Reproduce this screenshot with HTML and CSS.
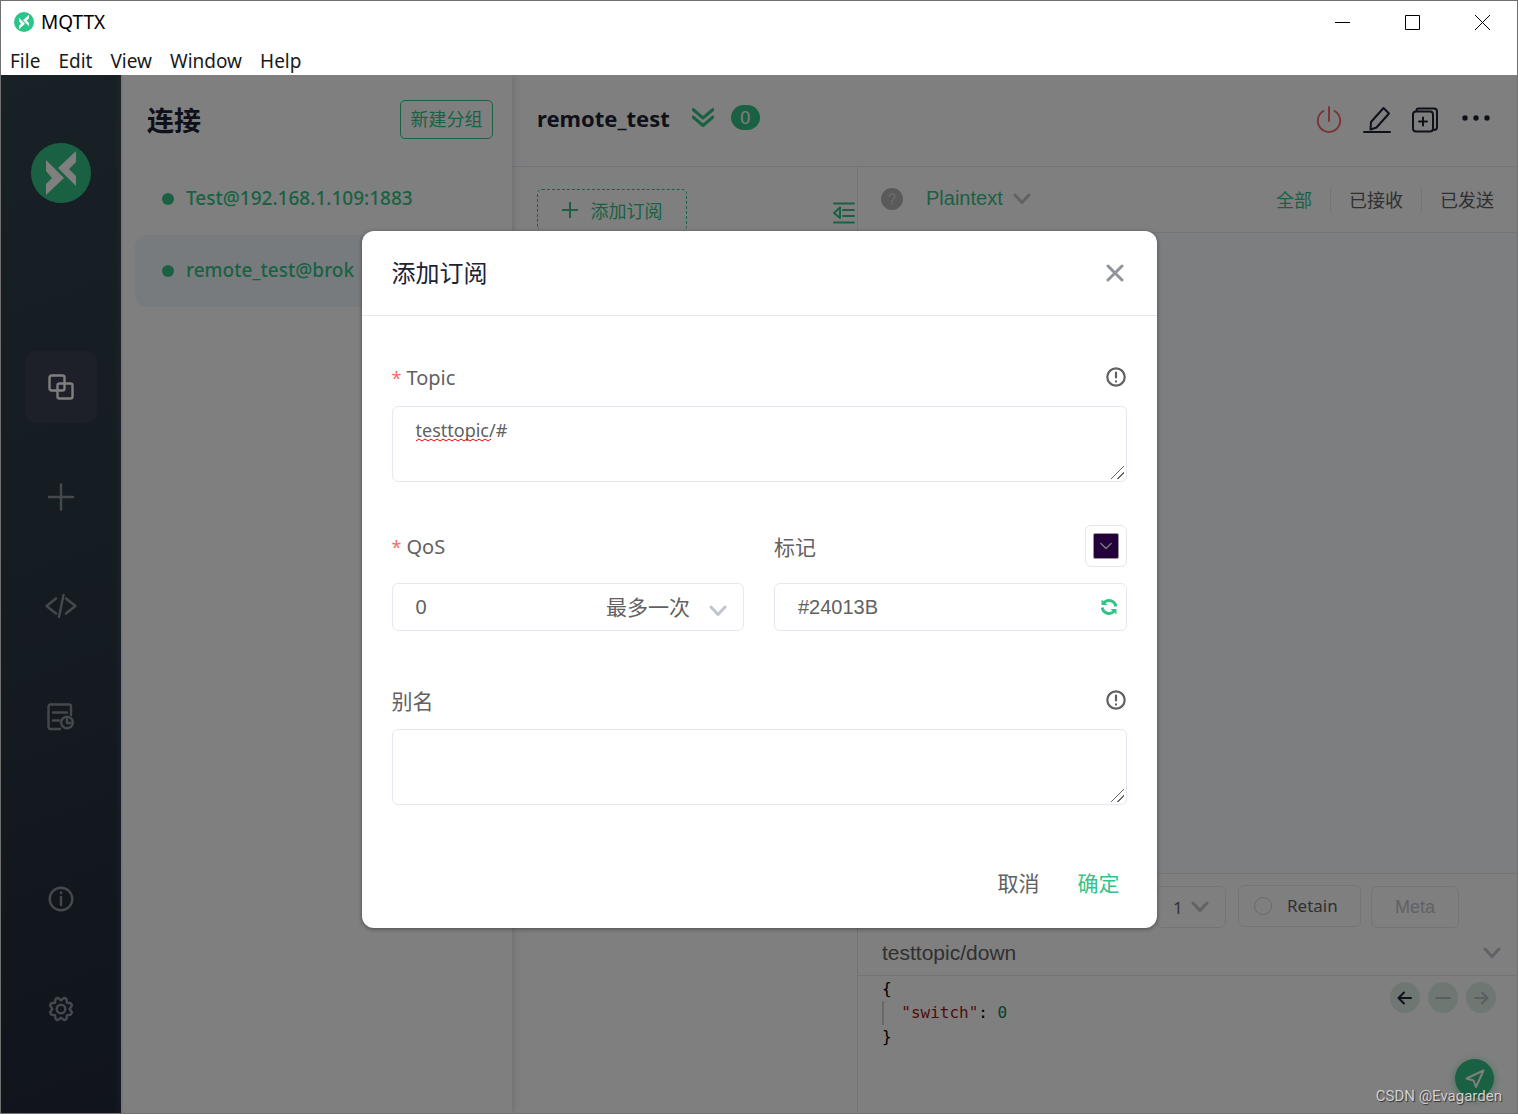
FILE: index.html
```html
<!DOCTYPE html>
<html lang="zh-CN">
<head>
    <meta charset="UTF-8">
    <meta name="viewport" content="width=device-width, initial-scale=1.0">
    <title>MQTTX</title>
    <link rel="stylesheet" href="styles.css">
</head>
<body>
    <header class="window-bar">
        <div class="title-row">
            <svg class="app-icon" viewBox="0 0 60 60">
                <circle cx="30" cy="30" r="30" fill="#2ac587"/>
                <path d="M15 17 33 35 15 52V41L21 35 15 28zM45 8V19L38 26 45 33V43L27 25z" fill="#fff"/>
            </svg>
            <span class="app-name">MQTTX</span>
            <div class="window-controls">
                <button type="button" aria-label="Minimize"><svg width="15" height="15" viewBox="0 0 15 15"><path d="M0 7.500H15"/></svg></button>
                <button type="button" aria-label="Maximize"><svg width="15" height="15" viewBox="0 0 15 15"><path d="M.5.5h14v14H.5z"/></svg></button>
                <button type="button" aria-label="Close"><svg width="15" height="15" viewBox="0 0 15 15"><path d="M0 0 15 15M15 0 0 15"/></svg></button>
            </div>
        </div>
        <nav class="menu-row">
            <a href="#">File</a>
            <a href="#">Edit</a>
            <a href="#">View</a>
            <a href="#">Window</a>
            <a href="#">Help</a>
        </nav>
    </header>

    <div class="app">
        <aside class="sidebar">
            <svg class="logo" viewBox="0 0 60 60">
                <circle cx="30" cy="30" r="30" fill="#34c388"/>
                <path d="M15 17 33 35 15 52V41L21 35 15 28zM45 8V19L38 26 45 33V43L27 25z" fill="#fff"/>
            </svg>
            <nav class="side-nav">
                <a href="#" class="active" aria-label="Connections">
                    <svg viewBox="0 0 28 28"><rect x="2.500" y="2.500" width="15" height="15" rx="2"/><rect x="10.500" y="10.500" width="15" height="15" rx="2"/></svg>
                </a>
                <a href="#" aria-label="New connection">
                    <svg viewBox="0 0 28 28" class="thin"><path d="M14 1.500v25M2 14h24"/></svg>
                </a>
                <a href="#" aria-label="Script">
                    <svg viewBox="0 0 32 28" class="wide"><path d="M11 5.500 1.500 13 11 20.500M21 5.500 30.500 13 21 20.500M18.500 2 14 24"/></svg>
                </a>
                <a href="#" aria-label="Log">
                    <svg viewBox="0 0 28 28"><path d="M13 26H3.500a2 2 0 0 1-2-2V3.500a2 2 0 0 1 2-2H22a2 2 0 0 1 2 2V12M6 9.500h14M6 17.500h6"/><circle cx="20" cy="19.500" r="5.800"/><path d="M20 16v4h3.500"/></svg>
                </a>
            </nav>
            <nav class="side-nav side-bottom">
                <a href="#" aria-label="About">
                    <svg viewBox="0 0 28 28"><circle cx="14" cy="14" r="11.300"/><path d="M14 12v8M14 7.500v.5"/></svg>
                </a>
                <a href="#" aria-label="Settings">
                    <svg viewBox="0 0 28 28"><circle cx="14" cy="14" r="4.300"/><path d="M10.800 2.800 14 5.200l3.200-2.400 2.200 1 .6 3.900 3.900.6 1 2.300L22.600 14l2.300 3.300-1 2.300-3.900.6-.6 3.900-2.200 1L14 22.800l-3.200 2.300-2.200-1-.6-3.900-3.900-.6-1-2.300L5.400 14l-2.300-3.400 1-2.300L8 7.700l.6-3.900z"/></svg>
                </a>
            </nav>
        </aside>

        <section class="connections">
            <div class="connections-head">
                <h1>连接</h1>
                <button type="button" class="group-btn">新建分组</button>
            </div>
            <ul class="connection-list">
                <li><a href="#"><i class="dot"></i><span>Test@192.168.1.109:1883</span></a></li>
                <li><a href="#" class="selected"><i class="dot"></i><span>remote_test@brok</span></a></li>
            </ul>
        </section>

        <main class="main">
            <div class="main-head">
                <h2>remote_test</h2>
                <button type="button" class="icon-btn expand" aria-label="Expand">
                    <svg width="22" height="20" viewBox="0 0 22 20"><path d="M1 1.500 11 10 21 1.500M1 9 11 17.500 21 9"/></svg>
                </button>
                <span class="badge">0</span>
                <div class="actions">
                    <button type="button" class="icon-btn power" aria-label="Disconnect">
                        <svg width="28" height="28" viewBox="0 0 28 28"><path d="M14 1v14M8.500 5A11.200 11.200 0 1 0 19.500 5"/></svg>
                    </button>
                    <button type="button" class="icon-btn" aria-label="Edit">
                        <svg width="28" height="28" viewBox="0 0 28 28"><path d="M1 26h26M7.500 23.500 8 16 20.500 2l5.500 5.500L13.500 21.500z"/></svg>
                    </button>
                    <button type="button" class="icon-btn" aria-label="New window">
                        <svg width="28" height="28" viewBox="0 0 28 28"><rect x="2" y="5.500" width="20" height="20" rx="3"/><path d="M5.500 5V4.500a2 2 0 0 1 2-2H23a3 3 0 0 1 3 3V21a3 3 0 0 1-3 3M12 11.500v8M8 15.500h8"/></svg>
                    </button>
                    <button type="button" class="icon-btn more" aria-label="More">
                        <svg width="28" height="28" viewBox="0 0 28 28"><circle cx="3" cy="12" r="2.700"/><circle cx="14" cy="12" r="2.700"/><circle cx="25" cy="12" r="2.700"/></svg>
                    </button>
                </div>
            </div>

            <div class="main-body">
                <div class="subscriptions">
                    <button type="button" class="add-sub">
                        <svg width="16" height="16" viewBox="0 0 16 16"><path d="M8 0v16M0 8h16"/></svg>
                        添加订阅
                    </button>
                    <button type="button" class="icon-btn collapse" aria-label="Collapse">
                        <svg width="22" height="22" viewBox="0 0 22 22"><path d="M1 1.500h20M10 8h11M10 14h11M1 20.500h20M7 5.500v10.500L1 11z"/></svg>
                    </button>
                </div>

                <div class="messages">
                    <div class="filter-bar">
                        <svg class="help" width="22" height="22" viewBox="0 0 22 22"><circle cx="11" cy="11" r="11"/><path d="M8 8.500a3 3 0 1 1 3.800 3q-.8.300-.8 1.500v1M11 15.500v1.200"/></svg>
                        <label class="format">
                            <select aria-label="Format"><option>Plaintext</option></select>
                            <svg width="18" height="12" viewBox="0 0 18 12"><path d="M2 2 9 9.500 16 2"/></svg>
                        </label>
                        <div class="filters">
                            <button type="button" class="on">全部</button>
                            <button type="button">已接收</button>
                            <button type="button">已发送</button>
                        </div>
                    </div>
                    <div class="message-list"></div>
                    <div class="publish">
                        <div class="publish-options">
                            <label class="qos">
                                <select aria-label="QoS"><option>1</option></select>
                                <svg width="18" height="12" viewBox="0 0 18 12"><path d="M2 2 9 9.500 16 2"/></svg>
                            </label>
                            <label class="retain"><input type="radio" name="retain">Retain</label>
                            <button type="button" class="meta">Meta</button>
                        </div>
                        <div class="publish-topic">
                            <input type="text" value="testtopic/down" aria-label="Topic">
                            <svg width="18" height="12" viewBox="0 0 18 12"><path d="M2 2 9 9.500 16 2"/></svg>
                        </div>
                        <div class="editor">
                            <pre class="code">{
<span class="indent">  <span class="key">"switch"</span>: <span class="num">0</span></span>
}</pre>
                            <div class="history">
                                <button type="button" class="current" aria-label="Previous"><svg width="16" height="14" viewBox="0 0 16 14"><path d="M14 7H2M7 1.500 1.500 7 7 12.500"/></svg></button>
                                <button type="button" aria-label="Clear"><svg width="16" height="14" viewBox="0 0 16 14"><path d="M1 7h14"/></svg></button>
                                <button type="button" aria-label="Next"><svg width="16" height="14" viewBox="0 0 16 14"><path d="M2 7h12M9 1.500 14.500 7 9 12.500"/></svg></button>
                            </div>
                            <button type="button" class="send" aria-label="Send">
                                <svg width="20" height="20" viewBox="0 0 20 20"><path d="M1.500 9.500 18.500 1.500 11 18 8.500 11.500z"/></svg>
                            </button>
                        </div>
                    </div>
                </div>
            </div>
        </main>

        <div class="overlay">
            <form class="dialog" role="dialog" aria-labelledby="dialogTitle">
                <div class="dialog-head">
                    <h3 id="dialogTitle">添加订阅</h3>
                    <button type="button" class="icon-btn close" aria-label="Close">
                        <svg width="18" height="18" viewBox="0 0 18 18"><path d="M2 2 16 16M16 2 2 16"/></svg>
                    </button>
                </div>
                <div class="dialog-body">
                    <div class="field area">
                        <div class="field-head">
                            <label for="topic" class="required">Topic</label>
                            <svg class="tip" width="22" height="22" viewBox="0 0 22 22"><circle cx="11" cy="11" r="8.700"/><path d="M11 6.500v5M11 15.400v.2"/></svg>
                        </div>
                        <div class="topic-box">
                            <textarea id="topic" spellcheck="false">testtopic/#</textarea>
                            <svg class="typo" width="75" height="4" viewBox="0 0 75 4"><path d="M0 3 3 1 6 3 9 1 12 3 15 1 18 3 21 1 24 3 27 1 30 3 33 1 36 3 39 1 42 3 45 1 48 3 51 1 54 3 57 1 60 3 63 1 66 3 69 1 72 3 75 1"/></svg>
                        </div>
                    </div>
                    <div class="field-pair">
                        <div class="field">
                            <div class="field-head">
                                <label for="qos" class="required">QoS</label>
                            </div>
                            <div class="control">
                                <select id="qos"><option>0</option></select>
                                <span class="qos-desc">最多一次</span>
                                <svg width="18" height="20" viewBox="0 0 18 20"><path d="M2 10 9 17.500 16 10"/></svg>
                            </div>
                        </div>
                        <div class="field">
                            <div class="field-head">
                                <label for="color">标记</label>
                                <button type="button" class="picker" aria-label="Pick colour">
                                    <span class="swatch"><svg width="12" height="8" viewBox="0 0 12 8"><path d="M1 1.500 6 6.500 11 1.500"/></svg></span>
                                </button>
                            </div>
                            <div class="control">
                                <input type="text" id="color" value="#24013B">
                                <button type="button" class="icon-btn refresh" aria-label="Refresh">
                                    <svg width="18" height="18" viewBox="0 0 18 18"><path d="M3.500 5.500A6.800 6.800 0 0 1 15.800 8.500M14.500 12.500A6.800 6.800 0 0 1 2.200 9.500"/><path class="head" d="M1.500 1.500v5.500h6zM16.500 16.500V11h-6z"/></svg>
                                </button>
                            </div>
                        </div>
                    </div>
                    <div class="field area">
                        <div class="field-head">
                            <label for="alias">别名</label>
                            <svg class="tip" width="22" height="22" viewBox="0 0 22 22"><circle cx="11" cy="11" r="8.700"/><path d="M11 6.500v5M11 15.400v.2"/></svg>
                        </div>
                        <textarea id="alias"></textarea>
                    </div>
                </div>
                <div class="dialog-foot">
                    <button type="button">取消</button>
                    <button type="submit" class="confirm">确定</button>
                </div>
            </form>
        </div>
        <span class="watermark">CSDN @Evagarden</span>
    </div>
</body>
</html>
```
FILE: styles.css
```css
* {
    margin: 0;
    padding: 0;
    box-sizing: border-box;
}

:root {
    --green: #34c388;
    --line: #e6e8f1;
    --text: #616161;
    --title: #1c2334;
    --ui: "Noto Sans", "Noto Sans CJK SC", sans-serif;
    --arial: "Liberation Sans", "Noto Sans CJK SC", sans-serif;
}

body {
    display: flex;
    flex-direction: column;
    min-height: 100vh;
    border: 1px solid #707070;
    background: #fff;
    color: var(--text);
    font-family: var(--ui);
    font-size: 18px;
}

a {
    color: inherit;
    text-decoration: none;
}

button, input, select, textarea {
    border: none;
    background: none;
    color: inherit;
    font: inherit;
    outline: none;
    appearance: none;
}

button {
    cursor: pointer;
}

svg {
    display: block;
    flex: none;
    fill: none;
    stroke-linecap: round;
    stroke-linejoin: round;
}

/* window bar */
.title-row {
    display: flex;
    align-items: center;
    height: 42px;
    padding-left: 13px;
    color: #000;
    font-size: 19px;
}

.app-icon {
    width: 20px;
    height: 20px;
    margin-right: 7px;
}

.window-controls {
    display: flex;
    margin-left: auto;
}

.window-controls button {
    width: 70px;
    height: 42px;
    display: flex;
    align-items: center;
    justify-content: center;
}

.window-controls svg {
    stroke: #000;
    stroke-linecap: butt;
}

.menu-row {
    display: flex;
    gap: 18px;
    height: 32px;
    padding-left: 9px;
    color: #1a1a1a;
    font-size: 19px;
    line-height: 36px;
}

/* app */
.app {
    position: relative;
    flex: 1;
    display: flex;
    overflow: hidden;
}

.sidebar {
    display: flex;
    flex-direction: column;
    align-items: center;
    width: 120px;
    padding: 68px 0;
    background: linear-gradient(160deg, #30424b, #2a3843 50%, #212838);
}

.logo {
    width: 60px;
    height: 60px;
    margin-bottom: 148px;
}

.side-nav {
    display: flex;
    flex-direction: column;
    gap: 38px;
}

.side-nav a {
    display: flex;
    align-items: center;
    justify-content: center;
    width: 72px;
    height: 72px;
    border-radius: 12px;
}

.side-nav .active {
    background: #3b4150;
}

.side-nav svg {
    width: 28px;
    height: 28px;
    stroke: #8a929b;
    stroke-width: 2.4;
}

.side-nav .wide {
    width: 32px;
}

.side-nav .active svg {
    stroke: #fff;
}

.side-bottom {
    margin-top: auto;
}

.connections {
    position: relative;
    z-index: 1;
    width: 391px;
    border-left: 2px solid #f0f0f6;
    background: #fff;
    box-shadow: 1px 0 8px rgba(139, 143, 173, 0.35);
}

.connections-head {
    display: flex;
    align-items: center;
    justify-content: space-between;
    height: 88px;
    padding: 0 19px 0 24px;
}

h1 {
    color: var(--title);
    font-size: 27px;
    line-height: 36px;
    padding-top: 4px;
}

.group-btn {
    width: 93px;
    height: 39px;
    border: 1px solid var(--green);
    border-radius: 5px;
    color: var(--green);
    line-height: 34px;
}

.connection-list {
    padding: 0 12px;
    list-style: none;
}

.connection-list a {
    display: flex;
    align-items: center;
    gap: 12px;
    height: 72px;
    padding-left: 27px;
    border-radius: 12px;
    color: var(--green);
    font-size: 19px;
    font-weight: 500;
}

.connection-list span {
    padding-bottom: 3px;
}

.connection-list .selected {
    background: #f1f7fc;
}

.dot {
    width: 12px;
    height: 12px;
    border-radius: 50%;
    background: var(--green);
}

/* main */
.main {
    flex: 1;
    min-width: 0;
    display: flex;
    flex-direction: column;
}

.main-head {
    display: flex;
    align-items: center;
    height: 92px;
    padding: 0 27px 6px 25px;
    border-bottom: 1px solid var(--line);
}

h2 {
    color: var(--title);
    font-size: 22px;
    line-height: 32px;
}

.icon-btn {
    display: flex;
    align-items: center;
    justify-content: center;
}

.icon-btn svg {
    stroke: var(--title);
    stroke-width: 2;
}

.expand {
    margin: 0 17px 0 22px;
}

.expand svg {
    stroke: var(--green);
    stroke-width: 3;
}

.badge {
    width: 29px;
    height: 25px;
    border-radius: 13px;
    background: var(--green);
    color: #fff;
    font-family: var(--arial);
    line-height: 27px;
    text-align: center;
}

.actions {
    display: flex;
    gap: 20px;
    margin-left: auto;
    padding-top: 4px;
}

.power svg {
    stroke: #f56c6c;
}

.more {
    margin-left: 3px;
}

.more svg {
    fill: var(--title);
    stroke: none;
}

.main-body {
    flex: 1;
    display: flex;
}

.subscriptions {
    display: flex;
    align-items: flex-start;
    justify-content: space-between;
    width: 346px;
    padding: 22px 2px 0 25px;
    border-right: 1px solid var(--line);
}

.add-sub {
    display: flex;
    align-items: center;
    justify-content: center;
    gap: 13px;
    width: 150px;
    height: 42px;
    border: 1px dashed var(--green);
    border-bottom-color: transparent;
    border-radius: 5px;
    color: var(--green);
}

.add-sub svg {
    stroke: var(--green);
    stroke-width: 2;
}

.collapse {
    margin-top: 13px;
}

.collapse svg {
    stroke: var(--green);
}

.messages {
    flex: 1;
    min-width: 0;
    display: flex;
    flex-direction: column;
}

.filter-bar {
    display: flex;
    align-items: center;
    height: 66px;
    padding: 0 23px 2px;
    border-bottom: 1px solid var(--line);
}

.help {
    fill: #b5b5b5;
}

.help path {
    fill: none;
    stroke: #e8e8e8;
}

.format {
    display: flex;
    align-items: center;
    gap: 10px;
    margin-left: 23px;
    color: var(--green);
    font-family: var(--arial);
    font-size: 20px;
}

.format select {
    padding-bottom: 1px;
}

.format svg,
.qos svg,
.publish-topic svg,
.control > svg {
    stroke: #c0c4cc;
    stroke-width: 3;
}

.filters {
    display: flex;
    align-items: center;
    margin-left: auto;
    padding-top: 2px;
}

.filters button {
    height: 24px;
    padding: 0 18px;
    line-height: 24px;
}

.filters button + button {
    border-left: 1px solid var(--line);
}

.filters button:last-child {
    padding-right: 0;
}

.filters .on {
    color: var(--green);
}

.message-list {
    flex: 1;
    background: #fafcff;
}

.publish {
    height: 240px;
    border-top: 1px solid var(--line);
}

.publish-options {
    display: flex;
    align-items: center;
    justify-content: flex-end;
    gap: 10px;
    height: 66px;
    padding-right: 58px;
}

.qos, .retain, .meta {
    display: flex;
    align-items: center;
    height: 42px;
    border: 1px solid var(--line);
    border-radius: 6px;
    font-size: 17px;
}

.qos {
    gap: 8px;
    padding: 0 16px;
}

.retain {
    gap: 15px;
    width: 123px;
    padding-left: 15px;
    margin: 0 0 3px 2px;
}

.retain input {
    width: 18px;
    height: 18px;
    border: 1px solid #d0d3dc;
    border-radius: 50%;
}

.meta {
    justify-content: center;
    width: 88px;
    color: #c0c4cc;
    font-family: var(--arial);
    font-size: 18px;
}

.publish-topic {
    display: flex;
    align-items: center;
    height: 36px;
    padding: 0 16px 10px 24px;
    border-bottom: 1px solid var(--line);
}

.publish-topic input {
    flex: 1;
    font-family: var(--arial);
    font-size: 21px;
}

.editor {
    position: relative;
    display: flex;
    align-items: flex-start;
    justify-content: space-between;
    height: 137px;
    padding: 1px 21px 0 24px;
}

.code {
    color: #000;
    font-family: "DejaVu Sans Mono", monospace;
    font-size: 16px;
    line-height: 24px;
}

.indent {
    display: inline-block;
    box-shadow: inset 2px 0 #d3d3d3;
}

.key {
    color: #a31515;
}

.num {
    color: #098658;
}

.history {
    display: flex;
    gap: 8px;
    padding-top: 5px;
}

.history button,
.send {
    display: flex;
    align-items: center;
    justify-content: center;
    border-radius: 50%;
}

.history button {
    width: 30px;
    height: 31px;
    background: #dfefe7;
}

.history svg {
    stroke: #b4bcc0;
    stroke-width: 2;
}

.history .current svg {
    stroke: var(--title);
}

.send {
    position: absolute;
    right: 23px;
    bottom: 15px;
    width: 39px;
    height: 39px;
    background: var(--green);
    box-shadow: 0 2px 8px rgba(52, 195, 136, 0.6);
}

.send svg {
    stroke: #fff;
    stroke-width: 2;
}

.watermark {
    position: absolute;
    right: 15px;
    bottom: 7px;
    z-index: 3;
    color: #d0d0d0;
    font-family: Roboto, sans-serif;
    font-size: 15px;
    line-height: 20px;
    text-shadow: 1px 1px 1px #333;
}

/* dialog */
.overlay {
    position: absolute;
    inset: 0;
    z-index: 2;
    background: rgba(0, 0, 0, 0.5);
}

.dialog {
    width: 795px;
    max-width: 90%;
    margin: 156px auto 0;
    border-radius: 12px;
    background: #fff;
    box-shadow: 0 1px 4px rgba(0, 0, 0, 0.4);
    font-size: 21px;
}

.dialog-head {
    display: flex;
    align-items: center;
    justify-content: space-between;
    height: 85px;
    padding: 0 33px 0 30px;
    border-bottom: 1px solid var(--line);
}

h3 {
    color: var(--title);
    font-size: 24px;
    font-weight: 400;
    line-height: 36px;
}

.close svg {
    stroke: #909399;
    stroke-width: 3;
}

.dialog-body {
    padding: 40px 30px 0;
}

.field-head {
    display: flex;
    align-items: center;
    justify-content: space-between;
    height: 42px;
    margin-bottom: 16px;
    font-size: 21px;
}

.area .field-head {
    margin-bottom: 8px;
}

.field-head .required {
    font-size: 20px;
}

.required::before {
    content: "*";
    margin-right: 5px;
    color: #f56c6c;
    font-size: 18px;
}

.tip {
    stroke: #616161;
    stroke-width: 2.2;
}

.dialog textarea {
    display: block;
    width: 100%;
    height: 76px;
    padding: 8px 23px;
    border: 1px solid var(--line);
    border-radius: 6px;
    font-size: 18px;
    line-height: 30px;
    resize: vertical;
}

.dialog textarea::-webkit-resizer {
    background: linear-gradient(135deg, transparent 48%, #666 48%, #666 53%, transparent 53%, transparent 73%, #666 73%, #666 78%, transparent 78%) 0 0 / 13px 13px no-repeat;
}

.topic-box {
    position: relative;
}

/* spelling squiggle under the first word */
.typo {
    position: absolute;
    top: 32px;
    left: 24px;
    stroke: #f00;
    pointer-events: none;
}

.field-pair {
    display: grid;
    grid-template-columns: 1fr 1fr;
    gap: 30px;
    margin: 43px 0 48px;
}

.control {
    display: flex;
    align-items: center;
    height: 48px;
    padding: 0 16px 0 23px;
    border: 1px solid var(--line);
    border-radius: 6px;
    font-family: var(--arial);
    font-size: 20px;
}

.control select,
.control input {
    flex: 1;
    min-width: 0;
}

.control .refresh {
    margin-right: -8px;
}

.qos-desc {
    margin-right: 19px;
    padding-bottom: 2px;
    font-size: 21px;
}

.picker {
    width: 42px;
    height: 42px;
    padding: 7px;
    border: 1px solid #e6e6e6;
    border-radius: 6px;
}

.swatch {
    display: flex;
    align-items: center;
    justify-content: center;
    width: 26px;
    height: 26px;
    border: 1px solid #999;
    border-radius: 2px;
    background: #24013b;
}

.swatch svg {
    stroke: #777;
    stroke-width: 1.5;
}

.refresh svg {
    stroke: var(--green);
    stroke-width: 3;
    stroke-linecap: butt;
}

.refresh .head {
    fill: var(--green);
    stroke: none;
}

.dialog-foot {
    display: flex;
    justify-content: flex-end;
    gap: 38px;
    padding: 57px 37px 24px;
}

.dialog-foot button {
    height: 42px;
    font-size: 21px;
    line-height: 42px;
}

.dialog-foot .confirm {
    color: var(--green);
}
```
